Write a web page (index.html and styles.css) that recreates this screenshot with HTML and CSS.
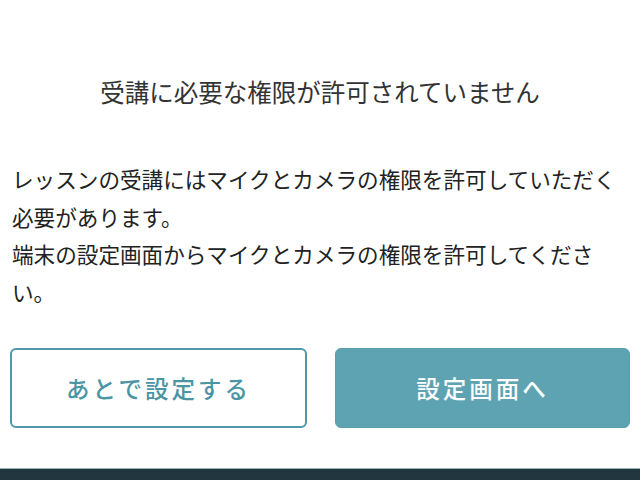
FILE: index.html
```html
<!DOCTYPE html>
<html lang="ja">
<head>
<meta charset="utf-8">
<link rel="stylesheet" href="styles.css">
</head>
<body>
<div class="page">
  <h1 class="title">受講に必要な権限が許可されていません</h1>
  <p class="message">レッスンの受講にはマイクとカメラの権限を許可していただく必要があります。<br>端末の設定画面からマイクとカメラの権限を許可してください。</p>
  <div class="actions">
    <button class="btn btn-outline">あとで設定する</button>
    <button class="btn btn-fill">設定画面へ</button>
  </div>
</div>
<div class="footer"></div>
</body>
</html>
```
FILE: styles.css
```css
html, body {
  margin: 0;
  padding: 0;
  background: #fff;
}
body {
  font-family: "Noto Sans CJK JP", "Noto Sans", sans-serif;
  width: 640px;
  height: 480px;
  overflow: hidden;
}
.page {
  height: 468px;
  box-sizing: border-box;
  padding: 74px 10px 0;
  display: flex;
  flex-direction: column;
}
.title {
  margin: 0;
  font-size: 24.5px;
  line-height: 36px;
  font-weight: 400;
  color: #333;
  text-align: center;
}
.message {
  margin: 50px 0 0;
  padding: 0 2px;
  font-size: 21.6px;
  line-height: 37.5px;
  color: #222;
}
.actions {
  margin-top: 38px;
  display: flex;
  gap: 28px;
}
.btn {
  flex: 1;
  height: 80px;
  border-radius: 6px;
  font-family: inherit;
  font-size: 23.5px;
  font-weight: 500;
  letter-spacing: 3px;
  box-sizing: border-box;
  cursor: pointer;
}
.btn-outline {
  background: #fff;
  color: #4a95a4;
  border: 2px solid #4f98a7;
}
.btn-fill {
  background: #5ea3b2;
  color: #fff;
  border: 1px solid #57a0ae;
}
.footer {
  height: 12px;
  background: #21363e;
  border-top: 1px solid #9fb1b6;
  box-sizing: border-box;
}
```
